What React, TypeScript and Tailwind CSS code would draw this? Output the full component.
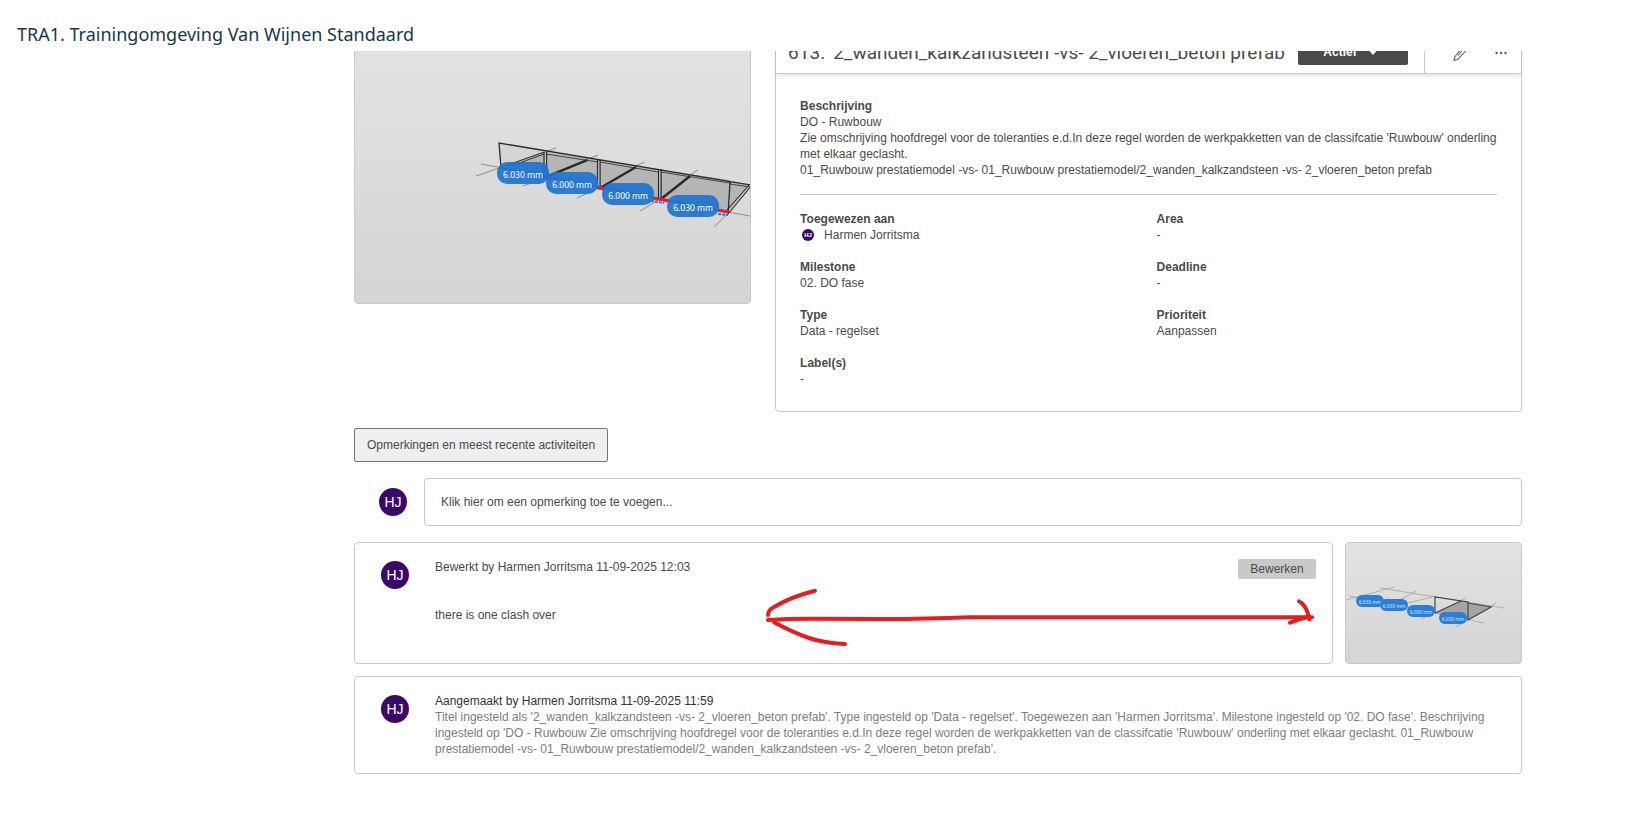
type Field = { label: string; value: string; avatar?: boolean };

const fields: Field[] = [
  { label: "Toegewezen aan", value: "Harmen Jorritsma", avatar: true },
  { label: "Area", value: "-" },
  { label: "Milestone", value: "02. DO fase" },
  { label: "Deadline", value: "-" },
  { label: "Type", value: "Data - regelset" },
  { label: "Prioriteit", value: "Aanpassen" },
  { label: "Label(s)", value: "-" },
];

const mainTags = [
  { x: 168, y: 122, text: "6.030 mm" },
  { x: 217, y: 132, text: "6.000 mm" },
  { x: 273, y: 143, text: "6.000 mm" },
  { x: 338, y: 155, text: "6.030 mm" },
];

const thumbTags = [
  { x: 24, y: 58, text: "6.030 mm" },
  { x: 48, y: 62, text: "6.000 mm" },
  { x: 75, y: 68, text: "6.000 mm" },
  { x: 107, y: 75, text: "6.030 mm" },
];

function Avatar() {
  return (
    <div className="flex size-7 shrink-0 items-center justify-center rounded-full bg-[#3b0a69] text-sm text-white">
      HJ
    </div>
  );
}

function MainModel() {
  return (
    <svg viewBox="0 0 395 252" className="block w-full" role="img" aria-label="3D model">
      <g fill="#808080" fillOpacity="0.42">
        <path d="M144 93 189 100 146 117Z" fillOpacity="0.08" />
        <path d="M189 101 V128 L150 116Z" />
        <path d="M191 101 243 109 V137 L191 127Z" />
        <path d="M245 109 303 118 V148 L245 137Z" />
        <path d="M306 119 375 129 373 162 306 148Z" />
        <path d="M375 130 395 134 373 162Z" />
      </g>
      <path
        d="M126 113 160 119 M121 125 201 97 M168 135 190 127 M222 147 243 137 M230 109 243 104 M279 116 289 111 M285 160 303 149 M333 125 343 119 M359 176 373 162 M373 161 395 165"
        stroke="#777"
        strokeWidth="0.8"
        fill="none"
      />
      <g stroke="#2a2a2a" fill="none">
        <path
          d="M146 117 144 92 396 134 M189 101 V128 M191.500 101 V128 M242.500 109 V138 M245 109 V138 M303.500 118 V149 M306 118 V149 M375 130 373 162"
          strokeWidth="1.3"
        />
        <path d="M191 103 243 111 M245 111 303 121 M306 121 375 132 M375 133 395 136" strokeWidth="0.8" />
        <path d="M150 115 189 101 M156 115 189 103" strokeWidth="0.9" />
        <path d="M193 125 232 109 M245 137 281 116 M306 148 335 125" strokeWidth="2.4" />
        <path d="M373 163 396 135 M371 160 394 134" strokeWidth="1" />
      </g>
      <path d="M146 117 373 161" stroke="#3d4f9c" strokeWidth="2" />
      <path d="M243 137 249 138 M297 147 314 150 M362 159 373 161" stroke="#ec1c2e" strokeWidth="3" />
      <path d="M292 149 309 152 M363 163 373 164" stroke="#2879d0" strokeWidth="2" strokeDasharray="3 1" />
      {mainTags.map((t) => (
        <g key={t.x}>
          <rect x={t.x - 26} y={t.y - 11} width="52" height="22" rx="10" fill="#1f74d0" fillOpacity="0.92" />
          <text
            x={t.x}
            y={t.y + 5}
            textAnchor="middle"
            fontSize="8.500"
            fill="#fff"
            className="font-['Noto_Sans',sans-serif]"
          >
            {t.text}
          </text>
        </g>
      ))}
    </svg>
  );
}

function ThumbModel() {
  return (
    <svg viewBox="0 0 175 120" className="block w-full" role="img" aria-label="3D model">
      <path
        d="M0 57 48 44 M34 45 158 65 M3 53 138 80 M42 64 70 48 M75 76 90 69 M58 61 90 53 M110 84 122 77 M112 58 120 55 M145 63 150 60"
        stroke="#999"
        strokeWidth="0.7"
        fill="none"
      />
      <path d="M89 70 115 58 145 64 122 77Z" fill="#808080" fillOpacity="0.6" />
      <path
        d="M89 70 V54 L122 59 V77 M122 60 145 64 122 77 M89 70 115 58"
        stroke="#444"
        strokeWidth="1.200"
        fill="none"
      />
      {thumbTags.map((t) => (
        <g key={t.x}>
          <rect x={t.x - 14} y={t.y - 6} width="28" height="12" rx="6" fill="#2b7fd8" />
          <text
            x={t.x}
            y={t.y + 3}
            textAnchor="middle"
            fontSize="4.800"
            fill="#dce9f8"
            className="font-['Noto_Sans',sans-serif]"
          >
            {t.text}
          </text>
        </g>
      ))}
    </svg>
  );
}

function Arrow() {
  return (
    <svg
      viewBox="0 0 552 60"
      className="pointer-events-none absolute top-[45px] right-4 w-[552px]"
      fill="none"
      stroke="#e81c1c"
      strokeWidth="4"
      strokeLinecap="round"
      strokeLinejoin="round"
      aria-hidden
    >
      <path d="M4 32 Q24 30.700 45 30.700 T110 31 T206 29.300 H548" />
      <path d="M4 27 Q4 22 10 19 Q26 9 51 2.700" />
      <path d="M10 34.300 Q30 45 45 50 Q60 55 81 56" />
      <path d="M535 13.300 Q542 16 545.500 31.300 L544 29 Q538 30 526 34.700" />
    </svg>
  );
}

export default function App() {
  return (
    <div className="min-h-screen bg-white font-['Liberation_Sans',Arial,sans-serif] text-xs text-[#4a4a4a]">
      <header className="relative z-10 flex h-[51px] items-center bg-white px-[17px] pt-4">
        <h1 className="font-['Noto_Sans',sans-serif] text-lg leading-6 text-[#16394a]">
          TRA1. Trainingomgeving Van Wijnen Standaard
        </h1>
      </header>

      {/* scrolled content, slides under the page header */}
      <main className="-mt-5 mr-[109px] ml-[354px] pb-8">
        <div className="flex items-start gap-6">
          <div className="w-[34%] overflow-hidden rounded border border-[#c9c9c9] bg-linear-to-b from-[#e3e3e3] to-[#d5d5d5] pt-[19px]">
            <MainModel />
          </div>

          <section className="flex-1 rounded border border-[#c9c9c9]">
            <div className="flex h-[42px] items-center border-b border-[#c9c9c9] shadow-[0_2px_5px_rgba(0,0,0,0.12)]">
              <h2 className="flex flex-1 gap-2 pl-3 font-[Roboto,sans-serif] text-[19px] leading-6 whitespace-nowrap">
                <span>613.</span>
                <span>2_wanden_kalkzandsteen -vs- 2_vloeren_beton prefab</span>
              </h2>
              <button
                type="button"
                className="mr-4 mb-0.5 flex h-[26px] w-[110px] items-center justify-center gap-2.5 rounded-xs bg-[#4a4a4a] pr-1 font-bold text-white"
              >
                Actief
                <svg viewBox="0 0 12 7" className="w-3" fill="currentColor" aria-hidden>
                  <path d="M0 0 H12 L6 7Z" />
                </svg>
              </button>
              <div className="flex w-[97px] items-center gap-6 self-stretch border-l border-[#c9c9c9] pl-7 text-[#5a5a5a]">
                <button type="button" aria-label="Bewerken">
                  <svg
                    viewBox="0 0 18 18"
                    className="size-[18px]"
                    fill="none"
                    stroke="currentColor"
                    strokeWidth="1.100"
                    strokeLinejoin="round"
                    aria-hidden
                  >
                    <path d="M1 16.500 2 12.500 10.500 2 Q12.500 0 14.500 1.500 T14.500 5 L5 15.200Z M5 11.500 10 5.500" />
                  </svg>
                </button>
                <button type="button" aria-label="Meer">
                  <svg viewBox="0 0 12 4" className="w-3" fill="currentColor" aria-hidden>
                    <circle cx="1.500" cy="2" r="1.200" />
                    <circle cx="6" cy="2" r="1.200" />
                    <circle cx="10.500" cy="2" r="1.200" />
                  </svg>
                </button>
              </div>
            </div>

            <div className="p-6">
              <h3 className="font-bold">Beschrijving</h3>
              <p>DO - Ruwbouw</p>
              <p>
                Zie omschrijving hoofdregel voor de toleranties e.d.In deze regel worden de werkpakketten van de
                classifcatie 'Ruwbouw' onderling met elkaar geclasht.
              </p>
              <p>
                01_Ruwbouw prestatiemodel -vs- 01_Ruwbouw prestatiemodel/2_wanden_kalkzandsteen -vs- 2_vloeren_beton
                prefab
              </p>
              <hr className="my-4 border-[#c9c9c9]" />
              <dl className="grid grid-cols-2 gap-4">
                {fields.map((f) => (
                  <div key={f.label}>
                    <dt className="font-bold">{f.label}</dt>
                    <dd className="flex items-center">
                      {f.avatar && (
                        <span className="mr-2.5 ml-0.5 flex size-3 items-center justify-center rounded-full bg-[#3b0a69] text-[6px] font-bold text-white">
                          HJ
                        </span>
                      )}
                      {f.value}
                    </dd>
                  </div>
                ))}
              </dl>
            </div>
          </section>
        </div>

        <button
          type="button"
          className="mt-4 h-[34px] rounded-xs border border-[#767676] bg-[#efefef] px-3"
        >
          Opmerkingen en meest recente activiteiten
        </button>

        <div className="mt-4 flex items-center gap-[17px] pl-[25px]">
          <Avatar />
          <input
            type="text"
            aria-label="Opmerking"
            placeholder="Klik hier om een opmerking toe te voegen..."
            className="h-12 flex-1 rounded-sm border border-[#c9c9c9] px-4 placeholder:text-[#4a4a4a]"
          />
        </div>

        <div className="mt-4 flex gap-3">
          <article className="relative flex flex-1 items-start gap-[26px] rounded border border-[#c9c9c9] py-4 pr-4 pl-[26px]">
            <div className="pt-0.5">
              <Avatar />
            </div>
            <div className="flex-1">
              <p>Bewerkt by Harmen Jorritsma 11-09-2025 12:03</p>
              <p className="mt-8">there is one clash over</p>
            </div>
            <button type="button" className="h-5 w-[78px] rounded-xs bg-[#c9c9c9]">
              Bewerken
            </button>
            <Arrow />
          </article>
          <div className="w-[177px] overflow-hidden rounded border border-[#c9c9c9] bg-linear-to-b from-[#e3e3e3] to-[#d5d5d5]">
            <ThumbModel />
          </div>
        </div>

        <article className="mt-3 flex items-start gap-[26px] rounded border border-[#c9c9c9] py-4 pr-6 pl-[26px]">
          <div className="pt-0.5">
            <Avatar />
          </div>
          <div className="flex-1">
            <p className="text-[#333]">Aangemaakt by Harmen Jorritsma 11-09-2025 11:59</p>
            <p className="text-[#7d7d7d]">
              Titel ingesteld als '2_wanden_kalkzandsteen -vs- 2_vloeren_beton prefab'. Type ingesteld op 'Data -
              regelset'. Toegewezen aan 'Harmen Jorritsma'. Milestone ingesteld op '02. DO fase'. Beschrijving ingesteld
              op 'DO - Ruwbouw Zie omschrijving hoofdregel voor de toleranties e.d.In deze regel worden de
              werkpakketten van de classifcatie 'Ruwbouw' onderling met elkaar geclasht. 01_Ruwbouw prestatiemodel -vs-
              01_Ruwbouw prestatiemodel/2_wanden_kalkzandsteen -vs- 2_vloeren_beton prefab'.
            </p>
          </div>
        </article>
      </main>
    </div>
  );
}
